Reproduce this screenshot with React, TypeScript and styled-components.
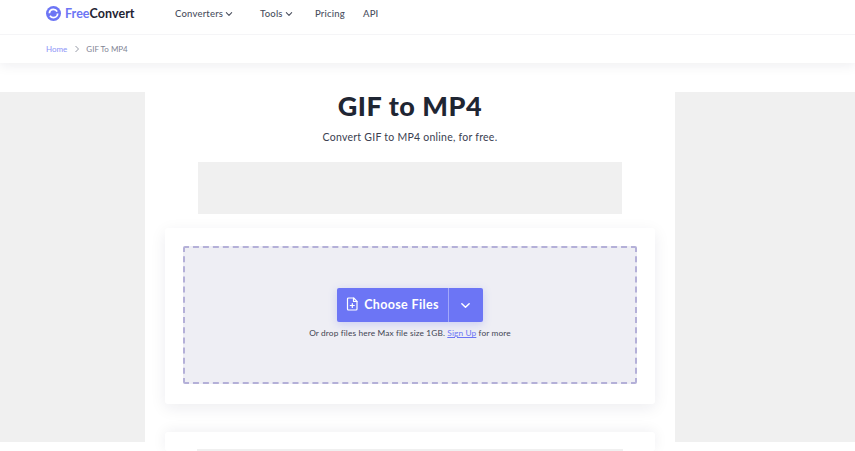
import React from "react";
import styled, { createGlobalStyle } from "styled-components";

const GlobalStyle = createGlobalStyle`
    html, body {
        margin: 0;
        padding: 0;
        height: 451px;
        overflow: hidden;
        background: #fff;
        font-family: "Lato", "Liberation Sans", sans-serif;
        color: #22283a;
    }
`;

const Header = styled.header`
    height: 63px;
    background: #fff;
    box-shadow: 0 2px 12px rgba(30, 30, 60, 0.08);
    position: relative;
`;

const Nav = styled.nav`
    height: 34px;
    padding-left: 46px;
    display: flex;
    align-items: flex-start;
    border-bottom: 1px solid #f5f5f7;
`;

const Logo = styled.div`
    display: flex;
    align-items: center;
    height: 27px;
    width: 129px;
    font-size: 12.5px;
    font-weight: 700;
    letter-spacing: 0.05px;
    color: #1f2433;
    svg {
        margin-right: 4px;
    }
    span {
        color: #6c75f5;
        font-weight: 700;
    }
`;

const NavItem = styled.div<{ $width: number }>`
    width: ${(p) => p.$width}px;
    height: 26px;
    display: flex;
    align-items: center;
    font-size: 9.5px;
    font-weight: 500;
    letter-spacing: 0.2px;
    color: #4a4f5e;
    svg {
        margin: 2px 0 0 2px;
    }
`;

const Crumbs = styled.div`
    height: 28px;
    padding-left: 46px;
    display: flex;
    align-items: center;
    font-size: 8px;
    color: #7f8494;
    a {
        color: #8d94f7;
    }
    svg {
        margin: 0 6px 0 7px;
    }
`;

const Content = styled.main`
    display: grid;
    grid-template-columns: 145px 530px 180px;
    align-items: start;
    padding-top: 29px;
`;

const SideAd = styled.div`
    height: 350px;
    background: #f0f0f0;
`;

const Center = styled.section`
    display: flex;
    flex-direction: column;
    align-items: center;
`;

const Title = styled.h1`
    margin: -1px 0 0;
    font-size: 27px;
    line-height: 30px;
    font-weight: 900;
    letter-spacing: 0.55px;
    color: #1f2633;
`;

const Subtitle = styled.p`
    margin: 9px 0 0;
    font-size: 10.5px;
    line-height: 14px;
    letter-spacing: 0.25px;
    color: #3a4050;
`;

const TopAd = styled.div`
    width: 424px;
    height: 52px;
    margin-top: 18px;
    background: #f0f0f0;
`;

const Card = styled.div`
    width: 490px;
    box-sizing: border-box;
    margin-top: 14px;
    padding: 18px 18px 20px;
    background: #fff;
    border-radius: 3px;
    box-shadow: 0 4px 16px rgba(30, 30, 60, 0.08);
`;

const Dropzone = styled.div`
    height: 138px;
    box-sizing: border-box;
    border: 2px dashed #b4b0d8;
    border-radius: 2px;
    background: #eeeef4;
    display: flex;
    flex-direction: column;
    align-items: center;
    padding-top: 40px;
`;

const ChooseButton = styled.div`
    display: flex;
    height: 34px;
    border-radius: 2px;
    background: #6c75f5;
    color: #fff;
    box-shadow: 0 2px 8px rgba(108, 117, 245, 0.28);
`;

const ChooseMain = styled.div`
    width: 112px;
    display: flex;
    align-items: center;
    justify-content: center;
    gap: 5px;
    padding-bottom: 2px;
    box-sizing: border-box;
    font-size: 12.5px;
    font-weight: 700;
    letter-spacing: 0.35px;
    border-right: 1px solid #a2a8fa;
`;

const ChooseArrow = styled.div`
    width: 34px;
    padding-right: 2px;
    box-sizing: border-box;
    display: flex;
    align-items: center;
    justify-content: center;
`;

const Hint = styled.p`
    margin: 5px 0 0;
    font-size: 8.3px;
    line-height: 12px;
    letter-spacing: 0.13px;
    color: #3f4453;
    a {
        color: #6c75f5;
        text-decoration: underline;
    }
`;

const NextCard = styled(Card)`
    margin-top: 28px;
    height: 19px;
    padding: 17px 32px 0;
    box-shadow: 0 -1px 14px rgba(30, 30, 60, 0.07);
`;

const NextBar = styled.div`
    height: 2px;
    background: #f0f0f0;
`;

const Chevron = ({ size = 8, color = "currentColor" }: { size?: number; color?: string }) => (
    <svg width={size} height={size} viewBox="0 0 12 12" fill="none" stroke={color} strokeWidth="1.6" strokeLinecap="round" strokeLinejoin="round">
        <path d="M2 4l4 4 4-4" />
    </svg>
);

const App = () => (
    <>
        <GlobalStyle />
        <Header>
            <Nav>
                <Logo>
                    <svg width="15" height="15" viewBox="0 0 16 16">
                        <circle cx="8" cy="8" r="8" fill="#6c75f5" />
                        <circle cx="8" cy="8" r="4.4" fill="none" stroke="#fff" strokeWidth="1.9" strokeDasharray="11 2.8" />
                        <circle cx="8" cy="8" r="1.6" fill="#6c75f5" />
                    </svg>
                    <span>Free</span>Convert
                </Logo>
                <NavItem $width={85}>
                    Converters <Chevron />
                </NavItem>
                <NavItem $width={55}>
                    Tools <Chevron />
                </NavItem>
                <NavItem $width={48}>Pricing</NavItem>
                <NavItem $width={30}>API</NavItem>
            </Nav>
            <Crumbs>
                <a>Home</a>
                <svg width="6" height="8" viewBox="0 0 6 8" fill="none" stroke="#8a8e9c" strokeWidth="0.9">
                    <path d="M1.5 1l3 3-3 3" />
                </svg>
                GIF To MP4
            </Crumbs>
        </Header>
        <Content>
            <SideAd />
            <Center>
                <Title>GIF to MP4</Title>
                <Subtitle>Convert GIF to MP4 online, for free.</Subtitle>
                <TopAd />
                <Card>
                    <Dropzone>
                        <ChooseButton>
                            <ChooseMain>
                                <svg width="13" height="14" viewBox="0 0 13 14" fill="none" stroke="#fff" strokeWidth="1.2" strokeLinejoin="round" strokeLinecap="round">
                                    <path d="M2.5 1h5.2L11 4.3V12a1 1 0 0 1-1 1H2.5a1 1 0 0 1-1-1V2a1 1 0 0 1 1-1z" />
                                    <path d="M7.5 1v3.5H11M6.3 6.5v4M4.3 8.5h4" />
                                </svg>
                                Choose Files
                            </ChooseMain>
                            <ChooseArrow>
                                <Chevron size={11} color="#fff" />
                            </ChooseArrow>
                        </ChooseButton>
                        <Hint>
                            Or drop files here Max file size 1GB. <a>Sign Up</a> for more
                        </Hint>
                    </Dropzone>
                </Card>
                <NextCard>
                    <NextBar />
                </NextCard>
            </Center>
            <SideAd />
        </Content>
    </>
);

export default App;
